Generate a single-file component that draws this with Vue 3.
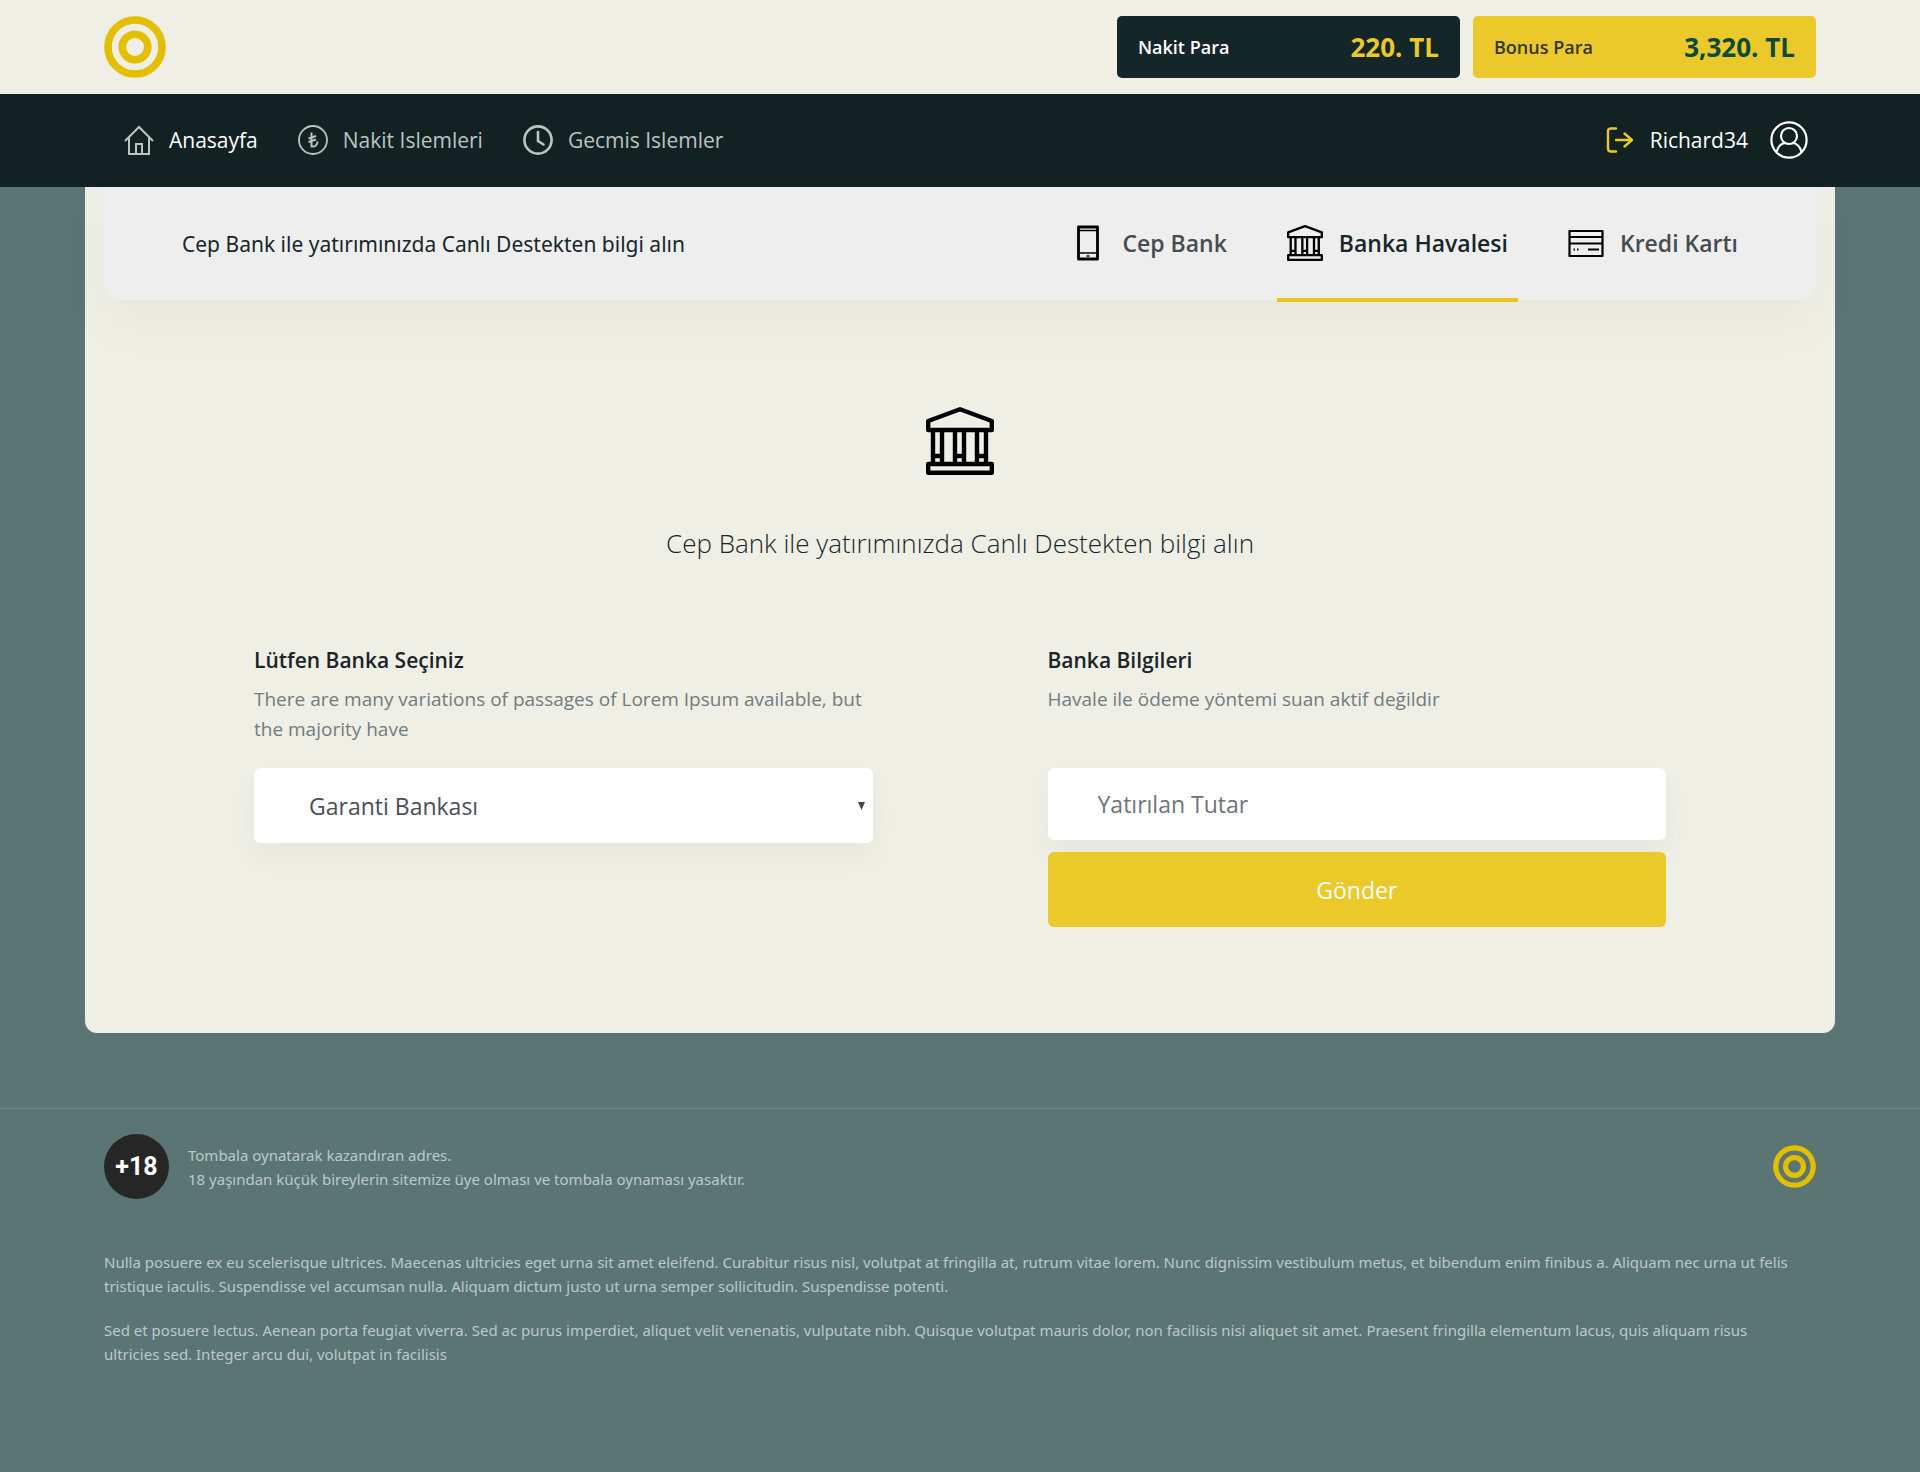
<script setup>
const menu = [
  { label: 'Anasayfa', icon: 'home', active: true },
  { label: 'Nakit Islemleri', icon: 'lira' },
  { label: 'Gecmis Islemler', icon: 'clock' }
]
const methods = [
  { label: 'Cep Bank', icon: 'phone' },
  { label: 'Banka Havalesi', icon: 'bank', active: true },
  { label: 'Kredi Kartı', icon: 'card' }
]
const notes = [
  'Nulla posuere ex eu scelerisque ultrices. Maecenas ultricies eget urna sit amet eleifend. Curabitur risus nisl, volutpat at fringilla at, rutrum vitae lorem. Nunc dignissim vestibulum metus, et bibendum enim finibus a. Aliquam nec urna ut felis tristique iaculis. Suspendisse vel accumsan nulla. Aliquam dictum justo ut urna semper sollicitudin. Suspendisse potenti.',
  'Sed et posuere lectus. Aenean porta feugiat viverra. Sed ac purus imperdiet, aliquet velit venenatis, vulputate nibh. Quisque volutpat mauris dolor, non facilisis nisi aliquet sit amet. Praesent fringilla elementum lacus, quis aliquam risus ultricies sed. Integer arcu dui, volutpat in facilisis'
]
</script>

<template>
  <div class="page">
    <svg class="sprite" aria-hidden="true">
      <symbol id="logo" viewBox="0 0 62 62">
        <g fill="none" stroke="#e4bf00" stroke-width="7.6">
          <circle cx="31" cy="31" r="27" />
          <circle cx="31" cy="31" r="12.8" />
        </g>
      </symbol>
      <symbol id="bank" viewBox="0 0 68 68">
        <g fill="none" stroke="currentColor" stroke-width="4.4" stroke-linejoin="round">
          <path d="M2.200 23V14L34 2.200l31.800 11.800v9zM2.200 57h63.600v8.800H2.200zM7 23v34M16 23v34M29 23v34M38 23v34M51 23v34M60 23v34M7 49h9M29 49h9M51 49h9" />
        </g>
      </symbol>
      <symbol id="home" viewBox="0 0 30 30">
        <path d="M1 16 15 2l14 14M5 12v17h20V12M12 29V19h6v10" fill="none" stroke="currentColor" stroke-width="2" />
      </symbol>
      <symbol id="lira" viewBox="0 0 30 30">
        <circle cx="15" cy="15" r="14" fill="none" stroke="currentColor" stroke-width="1.8" />
        <path d="M13.500 7.500v14c3.500.5 6-1.500 6-5M10.500 13.500l7.500-2.500M10.500 17l7.500-2.500" fill="none" stroke="currentColor" stroke-width="2" />
      </symbol>
      <symbol id="clock" viewBox="0 0 30 30">
        <g fill="none" stroke="currentColor" stroke-width="2.6" stroke-linecap="round">
          <circle cx="15" cy="15" r="13.6" />
          <path d="M15 7v9l5.500 3.500" />
        </g>
      </symbol>
      <symbol id="phone" viewBox="0 0 36 36">
        <path d="M8.500 2h19v32h-19z" fill="none" stroke="currentColor" stroke-width="2.800" stroke-linejoin="round" />
        <path d="M8 5.500h20M8 28h20M16.500 31h3" stroke="currentColor" stroke-width="1.4" />
      </symbol>
      <symbol id="card" viewBox="0 0 36 36">
        <path d="M1.500 6h33v25h-33zM1.500 12h33M1.500 18.500h33" fill="none" stroke="currentColor" stroke-width="2.2" stroke-linejoin="round" />
        <path d="M5.500 24.500h1.500M9 24.500h1.500M20 24.500h11" stroke="currentColor" stroke-width="2" />
      </symbol>
    </svg>

    <header class="top">
      <div class="wrap top-row">
        <a href="#" aria-label="Ana sayfa"><svg class="logo"><use href="#logo" /></svg></a>
        <div class="balances">
          <div class="balance dark"><span>Nakit Para</span><strong>220. TL</strong></div>
          <div class="balance gold"><span>Bonus Para</span><strong>3,320. TL</strong></div>
        </div>
      </div>
    </header>

    <nav class="nav">
      <div class="wrap nav-row">
        <div class="menu">
          <a v-for="m in menu" :key="m.label" href="#" :class="{ active: m.active }">
            <svg class="menu-icon"><use :href="'#' + m.icon" /></svg><span>{{ m.label }}</span>
          </a>
        </div>
        <div class="user">
          <a href="#" class="exit" aria-label="Çıkış">
            <svg viewBox="0 0 28 26"><path d="M10 1.500H5Q2 1.500 2 4.500v17q0 3 3 3h5M10 13h16M18.500 6.500 26 13l-7.500 6.500" fill="none" stroke="currentColor" stroke-width="2.4" stroke-linecap="round" stroke-linejoin="round" /></svg>
          </a>
          <a href="#" class="name">Richard34
            <svg viewBox="0 0 38 38"><g fill="none" stroke="currentColor" stroke-width="2.2"><circle cx="19" cy="19" r="17.6" /><circle cx="19" cy="15" r="8" /><path d="M6.500 31C8 25.500 11.500 22.500 15 22M31.500 31c-1.500-5.500-5-8.500-8.500-9" /></g></svg>
          </a>
        </div>
      </div>
    </nav>

    <main class="panel">
      <div class="tabs">
        <p>Cep Bank ile yatırımınızda Canlı Destekten bilgi alın</p>
        <div class="methods">
          <a v-for="m in methods" :key="m.label" href="#" :class="{ active: m.active }">
            <svg><use :href="'#' + m.icon" /></svg><span>{{ m.label }}</span>
          </a>
        </div>
      </div>
      <svg class="hero"><use href="#bank" /></svg>
      <h1>Cep Bank ile yatırımınızda Canlı Destekten bilgi alın</h1>
      <form class="form" @submit.prevent>
        <div class="field">
          <label for="bank-select">Lütfen Banka Seçiniz</label>
          <p>There are many variations of passages of Lorem Ipsum available, but the majority have</p>
          <div class="select">
            <select id="bank-select"><option>Garanti Bankası</option></select>
            <svg viewBox="0 0 7 8"><path d="M0 0h7L3.500 8z" fill="#444" /></svg>
          </div>
        </div>
        <div class="field">
          <label for="amount">Banka Bilgileri</label>
          <p>Havale ile ödeme yöntemi suan aktif değildir</p>
          <input id="amount" type="text" placeholder="Yatırılan Tutar" />
          <button type="submit">Gönder</button>
        </div>
      </form>
    </main>

    <footer>
      <div class="wrap">
        <div class="foot-row">
          <span class="age">+18</span>
          <p>Tombala oynatarak kazandıran adres.<br />18 yaşından küçük bireylerin sitemize üye olması ve tombala oynaması yasaktır.</p>
          <svg class="foot-logo"><use href="#logo" /></svg>
        </div>
        <p v-for="n in notes" :key="n" class="note">{{ n }}</p>
      </div>
    </footer>
  </div>
</template>

<style>
body { background: #5a7574; }
</style>

<style scoped>
* { box-sizing: border-box; }
.page { font-family: "Open Sans", "Noto Sans", sans-serif; color: #16262a; }
.sprite { position: absolute; width: 0; height: 0; }
a { color: inherit; text-decoration: none; }
p, h1 { margin: 0; }
svg { display: block; flex: none; }
.wrap { max-width: 1712px; margin: 0 auto; }
.top { background: #efefe6; }
.top-row { display: flex; justify-content: space-between; align-items: center; height: 94px; }
.logo { width: 62px; height: 62px; }
.balances { display: flex; gap: 13px; }
.balance { display: flex; align-items: center; justify-content: space-between; width: 343px; height: 62px; padding: 0 21px; border-radius: 5px; font-size: 18px; font-weight: 600; }
.balance strong { font-size: 26px; font-weight: 700; }
.dark { background: #152628; color: #fff; }
.dark strong { color: #ecc92a; }
.gold { background: #ecc92a; color: #33351f; }
.gold strong { color: #0c4a3c; }
.nav { background: #122122; color: #fff; }
.nav-row { display: flex; justify-content: space-between; align-items: center; height: 93px; padding: 0 8px 2px 20px; font-size: 21px; }
.menu { display: flex; gap: 40px; }
.menu a { display: flex; align-items: center; gap: 15px; color: #bcc4c3; }
.menu a.active span { color: #fff; }
.menu-icon { width: 30px; height: 30px; }
.user, .name { display: flex; align-items: center; }
.user { gap: 16px; }
.name { gap: 22px; }
.exit svg { width: 28px; height: 26px; color: #ecc92a; }
.name svg { width: 38px; height: 38px; }
.panel { max-width: 1750px; min-height: 846px; margin: 0 auto; padding: 0 19px 105px; background: #efefe6; border-radius: 0 0 12px 12px; }
.tabs { display: flex; justify-content: space-between; align-items: center; height: 113px; padding: 0 68px 0 78px; background: #eee; border-radius: 0 0 14px 14px; box-shadow: 0 20px 50px rgba(120, 120, 60, .06); font-family: "Noto Sans", sans-serif; font-size: 21px; }
.methods { display: flex; height: 115px; align-self: flex-start; gap: 40px; font-family: "Open Sans", sans-serif; }
.methods a { display: flex; align-items: center; gap: 16px; padding: 0 10px; color: #454d50; font-size: 23px; font-weight: 600; border-bottom: 4px solid transparent; }
.methods a.active { color: #16262a; border-color: #ebc619; }
.methods svg { width: 36px; height: 36px; color: #000; }
.hero { width: 68px; height: 68px; margin: 107px auto 0; color: #000; }
h1 { margin-top: 48px; font-size: 26px; line-height: 40px; font-weight: 300; text-align: center; }
.form { display: grid; grid-template-columns: 1fr 1fr; gap: 175px; margin-top: 81px; padding: 0 150px; }
.field { display: flex; flex-direction: column; }
.field label { font-size: 21px; line-height: 32px; font-weight: 600; color: #1c2428; }
.field p { min-height: 60px; margin: 8px 0 24px; font-size: 19px; line-height: 30px; color: #727b80; }
.select { position: relative; }
.select svg { position: absolute; right: 8px; top: 34px; width: 7px; height: 8px; pointer-events: none; }
select, input { display: block; width: 100%; border: 0; border-radius: 6px; background: #fff; font: inherit; font-size: 23px; box-shadow: 0 14px 24px rgba(120, 120, 60, .06); }
select { appearance: none; height: 75px; padding: 0 55px; color: #495057; }
input { height: 72px; padding: 0 50px; }
input::placeholder { color: #6c757d; opacity: 1; }
button { height: 75px; margin-top: 12px; border: 0; border-radius: 6px; background: #ecc92a; color: #fff; font: inherit; font-size: 23px; }
footer { margin-top: 75px; padding: 25px 0 100px; border-top: 1px solid #688583; color: #bdc9c8; font-family: "Noto Sans", sans-serif; font-size: 15px; line-height: 24px; }
.foot-row { display: flex; align-items: center; margin-bottom: 51px; }
.age { display: grid; place-items: center; width: 65px; height: 65px; margin-right: 19px; border-radius: 50%; background: #262626; color: #fff; font-family: Roboto, sans-serif; font-size: 25px; font-weight: 700; }
.foot-logo { width: 43px; height: 43px; margin-left: auto; }
.note { margin-bottom: 20px; padding-right: 16px; }
</style>
